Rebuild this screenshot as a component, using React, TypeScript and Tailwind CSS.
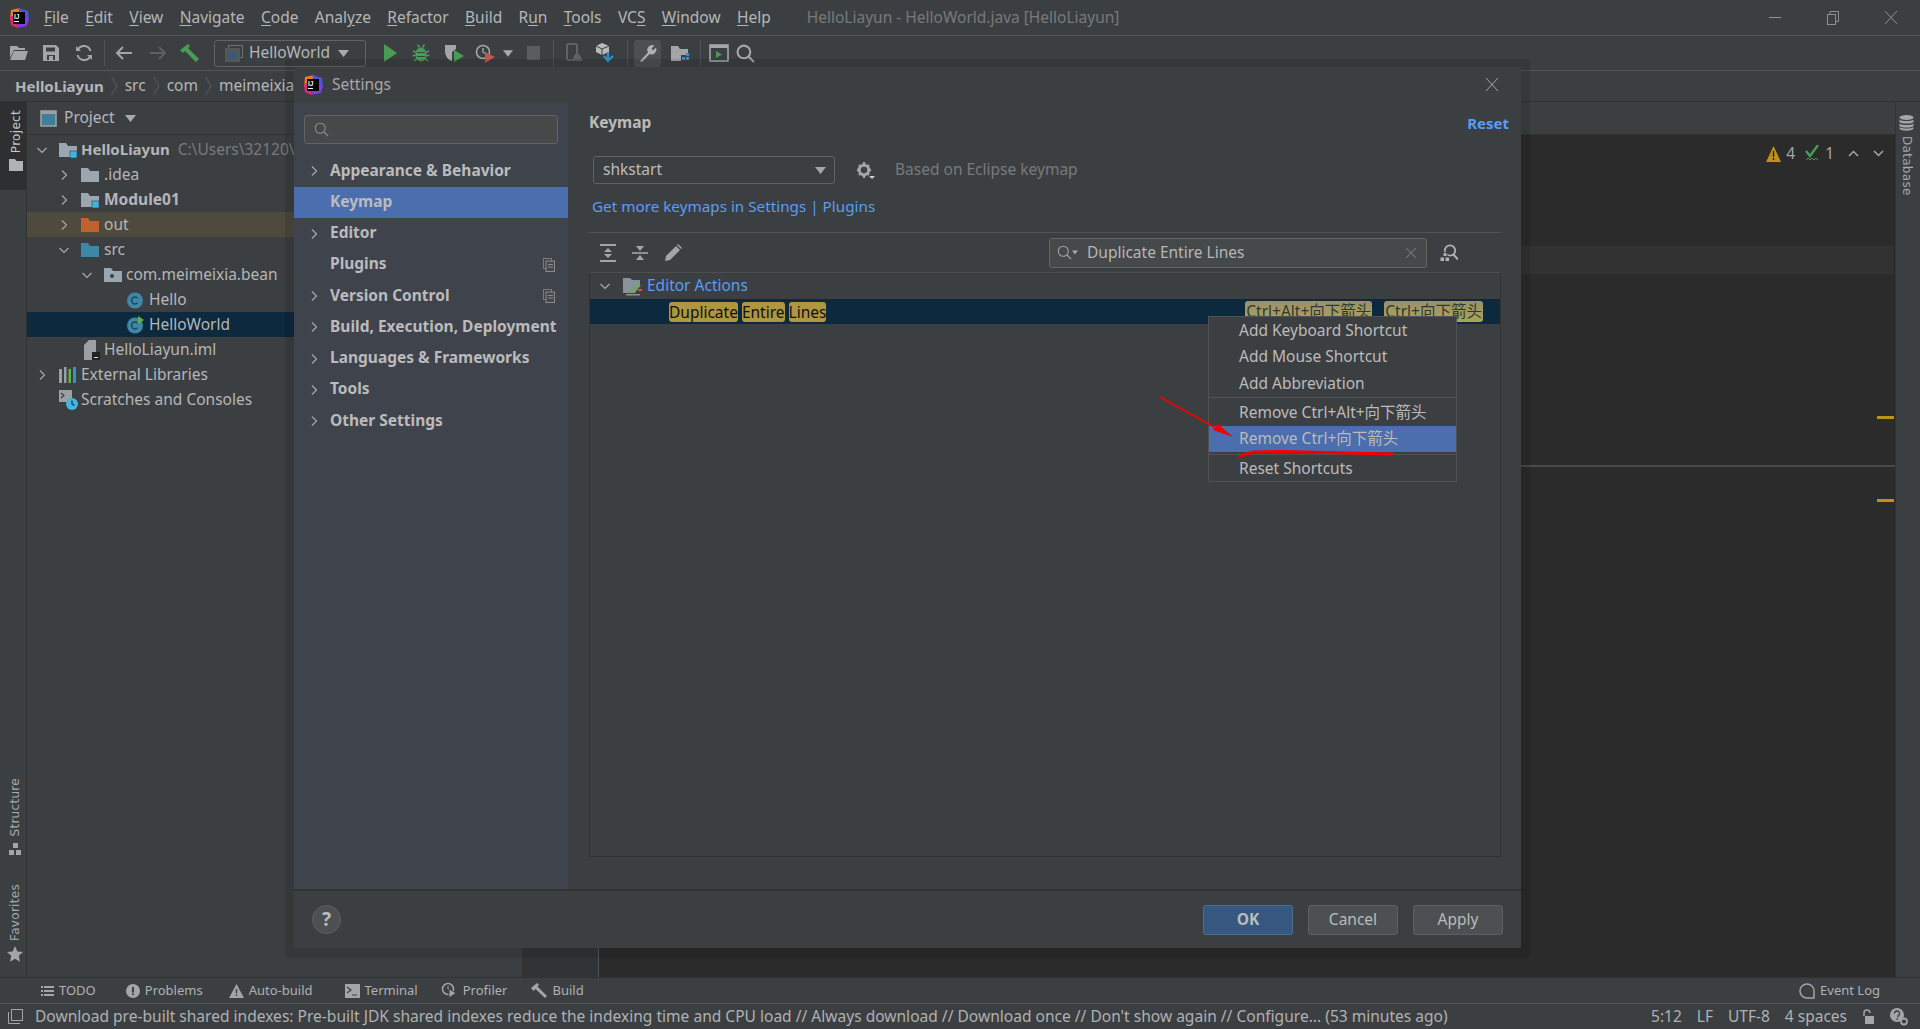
import React from 'react';

const Logo = ({ size = 20 }: { size?: number }) => (
  <svg width={size} height={size} viewBox="0 0 20 20">
    <path d="M2 2 L11 0 L8 10 L1 12 Z" fill="#f97a12" />
    <path d="M1 9 L8 6 L8 20 L2 17 Z" fill="#e8256f" />
    <path d="M9 0 L19 3 L20 13 L12 8 Z" fill="#4a55e8" />
    <path d="M10 8 L20 10 L18 18 L8 20 Z" fill="#7c3ce8" />
    <rect x="4" y="4" width="12" height="12" fill="#000" />
    <text x="5" y="10.5" fontSize="6.5" fontWeight="700" fill="#fff" fontFamily="Liberation Sans">IJ</text>
    <rect x="5" y="13" width="5" height="1" fill="#fff" />
  </svg>
);

const FolderIcon = ({ color = '#9aa7b0', badge = false, dot = false, w = 18 }: { color?: string; badge?: boolean; dot?: boolean; w?: number }) => (
  <svg width={w} height={16} viewBox="0 0 18 16" className="shrink-0">
    <path d="M0 1h7l2 3h9v11H0z" fill={color} />
    {dot && <circle cx="8" cy="9" r="2" fill="#3c3f41" />}
    {badge && <rect x="11" y="9" width="7" height="7" fill="#3cb4e6" stroke="#3c3f41" strokeWidth="0.6" />}
  </svg>
);

const ClassIcon = ({ run = false }: { run?: boolean }) => (
  <svg width={18} height={18} viewBox="0 0 18 18" className="shrink-0">
    <circle cx="9" cy="9.5" r="8" fill="#3f87a8" />
    <path d="M11.5 7.2 A3.4 3.4 0 1 0 11.5 11.8" fill="none" stroke="#24475a" strokeWidth="1.5" />
    {run && <path d="M12 0 L18 4 L12 8 Z" fill="#5fb34a" />}
  </svg>
);

const Chevron = ({ open = false }: { open?: boolean }) => (
  <svg width={12} height={12} viewBox="0 0 12 12" className="shrink-0">
    <path d={open ? 'M1.5 4 L6 8.5 L10.5 4' : 'M4 1.5 L8.5 6 L4 10.5'} fill="none" stroke="#a6a8aa" strokeWidth="1.2" />
  </svg>
);

const Tri = ({ color = '#a8aaac', w = 11 }: { color?: string; w?: number }) => (
  <svg width={w} height={7} viewBox="0 0 11 7" className="shrink-0">
    <path d="M0 0h11L5.5 7z" fill={color} />
  </svg>
);

const CopyIcon = () => (
  <svg width={12} height={14} viewBox="0 0 12 14" className="shrink-0">
    <rect x="0.5" y="0.5" width="8" height="10" fill="none" stroke="#787b7d" />
    <rect x="3" y="3" width="8.5" height="10.5" fill="#45484b" stroke="#8a8d8f" />
    <path d="M5 6.5h5M5 9h5" stroke="#8a8d8f" />
  </svg>
);

const SearchGlyph = ({ size = 18, color = '#a8aaac', sw = 2 }: { size?: number; color?: string; sw?: number }) => (
  <svg width={size} height={size} viewBox="0 0 18 18" className="shrink-0">
    <circle cx="7.5" cy="7.5" r="6" fill="none" stroke={color} strokeWidth={sw} />
    <path d="M12 12 L17 17" stroke={color} strokeWidth={sw} />
  </svg>
);

const menus: [string, string, string][] = [
  ['', 'F', 'ile'], ['', 'E', 'dit'], ['', 'V', 'iew'], ['', 'N', 'avigate'], ['', 'C', 'ode'],
  ['Anal', 'y', 'ze'], ['', 'R', 'efactor'], ['', 'B', 'uild'], ['R', 'u', 'n'], ['', 'T', 'ools'],
  ['VC', 'S', ''], ['', 'W', 'indow'], ['', 'H', 'elp'],
];

const TitleBar = () => (
  <div className="relative h-[36px] shrink-0 flex items-center border-b border-[#515456] bg-[#3c3f41]">
    <div className="ml-[9px] w-[20px]"><Logo /></div>
    <div className="ml-[15px] flex gap-[16.4px] text-[#b4b6b8]">
      {menus.map((m) => (
        <span key={m[0] + m[1]}>{m[0]}<span className="underline underline-offset-2">{m[1]}</span>{m[2]}</span>
      ))}
    </div>
    <span className="ml-[36px] text-[#77797b]">HelloLiayun - HelloWorld.java [HelloLiayun]</span>
    <div className="ml-auto mr-[23px] flex items-center gap-[46px]">
      <div className="w-[12px] h-px bg-[#8d8f91]" />
      <svg width={12} height={14} viewBox="0 0 12 14"><rect x="0.5" y="3.5" width="8" height="10" fill="none" stroke="#8d8f91" /><path d="M3 3V0.5h8.5v10H9" fill="none" stroke="#8d8f91" /></svg>
      <svg width={12} height={13} viewBox="0 0 12 13"><path d="M0 0L12 13M12 0L0 13" stroke="#8d8f91" /></svg>
    </div>
  </div>
);

const Sep = ({ cls }: { cls: string }) => <div className={`w-px h-[26px] bg-[#515456] shrink-0 ${cls}`} />;

const Toolbar = () => (
  <div className="h-[35px] shrink-0 flex items-center border-b border-[#515456] bg-[#3c3f41]">
    <svg className="ml-[9px] shrink-0" width={20} height={16} viewBox="0 0 20 16"><path d="M1 1h7l2 2h6v2H5L1 13z" fill="#a3a5a7" /><path d="M5 6h14l-3 9H1z" fill="#a3a5a7" /></svg>
    <svg className="ml-[12px] shrink-0" width={20} height={18} viewBox="0 0 18 18"><path d="M1 1h13l3 3v13H1z" fill="#a3a5a7" /><rect x="4" y="3.5" width="9" height="4" fill="#3c3f41" /><rect x="5" y="11" width="8" height="5" fill="#3c3f41" /><rect x="7" y="12" width="4" height="4" fill="#a3a5a7" /></svg>
    <svg className="ml-[13px] shrink-0" width={20} height={18} viewBox="0 0 18 18"><path d="M15.5 7A7 7 0 0 0 3 5M2.5 11A7 7 0 0 0 15 13" fill="none" stroke="#a3a5a7" strokeWidth="2" /><path d="M1 2v5h5zM17 16v-5h-5z" fill="#a3a5a7" /></svg>
    <Sep cls="ml-[10px]" />
    <svg className="ml-[9px] shrink-0" width={20} height={16} viewBox="0 0 20 16"><path d="M18 8H4M9 2L3 8l6 6" fill="none" stroke="#a3a5a7" strokeWidth="2" /></svg>
    <svg className="ml-[14px] shrink-0" width={20} height={16} viewBox="0 0 20 16"><path d="M2 8h14M11 2l6 6-6 6" fill="none" stroke="#5d6062" strokeWidth="2" /></svg>
    <svg className="ml-[12px] shrink-0" width={20} height={20} viewBox="0 0 20 20"><path d="M0 7L8 1l2 2-2 2 11 11-3 3L5 8 3 10z" fill="#499c54" /></svg>
    <div className="ml-[14px] w-[152px] h-[27px] rounded-[3px] border border-[#646464] flex items-center shrink-0">
      <svg className="ml-[10px] shrink-0" width={18} height={17} viewBox="0 0 18 17"><rect x="3.5" y="0.5" width="14" height="12" fill="none" stroke="#6e7173" /><rect x="0" y="3" width="15" height="14" fill="#555859" /><rect x="2" y="6" width="11" height="9" fill="#3d5a72" /></svg>
      <span className="ml-[6px] text-[#b4b6b8]">HelloWorld</span>
      <span className="ml-[8px]"><Tri /></span>
    </div>
    <svg className="ml-[14px] shrink-0" width={20} height={20} viewBox="0 0 20 20"><path d="M4 1l13 9-13 9z" fill="#499c54" /></svg>
    <svg className="ml-[11px] shrink-0" width={20} height={20} viewBox="0 0 20 20"><path d="M6.5 1.5l2 3M13.5 1.5l-2 3M2 8l3 1.5M18 8l-3 1.5M1.5 12.5h3.5M18.5 12.5H15M3 18l3-2.5M17 18l-3-2.5" stroke="#499c54" strokeWidth="1.6" /><ellipse cx="10" cy="11.5" rx="5.5" ry="7" fill="#499c54" /><path d="M6 9.5h8M6 13.5h8" stroke="#3c3f41" strokeWidth="1.1" /></svg>
    <svg className="ml-[13px] shrink-0" width={20} height={20} viewBox="0 0 20 20"><path d="M1 2h11v4L8 9v9C4 17 1 13 1 8z" fill="#a3a5a7" /><path d="M10 7l10 6-10 6z" fill="#499c54" /></svg>
    <svg className="ml-[11px] shrink-0" width={20} height={20} viewBox="0 0 20 20"><circle cx="8" cy="9" r="6.5" fill="none" stroke="#a3a5a7" strokeWidth="1.6" /><path d="M8 5v4l3 2" fill="none" stroke="#a3a5a7" strokeWidth="1.4" /><path d="M10 9l10 5-10 6z" fill="#c75450" /></svg>
    <span className="ml-[8px]"><Tri w={10} /></span>
    <div className="ml-[10px] w-[20px] flex justify-center shrink-0"><div className="w-[13px] h-[14px] bg-[#5a5d5f]" /></div>
    <Sep cls="ml-[10px]" />
    <svg className="ml-[11px] shrink-0" width={20} height={20} viewBox="0 0 20 20"><rect x="2" y="1" width="10" height="16" rx="1" fill="none" stroke="#5f6264" strokeWidth="2" /><path d="M7 18l3-7h4l4 7z" fill="#5f6264" /></svg>
    <svg className="ml-[10px] shrink-0" width={20} height={20} viewBox="0 0 20 20"><path d="M7 0l7 3v6l-7 3-6-3V3z" fill="#b8babc" /><path d="M7 6L1 3M7 6l7-3M7 6v6" stroke="#3c3f41" /><path d="M13 9v7M9 13l4 5 5-5" fill="none" stroke="#3592c4" strokeWidth="2.2" /></svg>
    <Sep cls="ml-[12px]" />
    <div className="ml-[6px] w-[27px] h-[27px] rounded-[3px] bg-[#4c5052] flex items-center justify-center shrink-0">
      <svg width={20} height={20} viewBox="0 0 20 20"><path d="M2 18L10 9.5A5 5 0 0 1 16.5 2.5L13.5 5.5 15 7.5 18 4.5A5 5 0 0 1 11.5 11L4 19z" fill="#b0b2b4" /></svg>
    </div>
    <svg className="ml-[9px] shrink-0" width={20} height={20} viewBox="0 0 20 20"><path d="M1 3h7l2 3h8v6h-7v6H1z" fill="#a3a5a7" /><path d="M12 14h3v3h-3zM16 14h3v3h-3zM16 10h3v3h-3z" fill="#3592c4" /></svg>
    <Sep cls="ml-[10px]" />
    <svg className="ml-[8px] shrink-0" width={20} height={18} viewBox="0 0 20 18"><rect x="1" y="1" width="18" height="16" fill="none" stroke="#a3a5a7" strokeWidth="1.6" /><rect x="1" y="1" width="18" height="3" fill="#a3a5a7" /><path d="M7 7l6 3.5-6 3.5z" fill="#499c54" /></svg>
    <div className="ml-[7px]"><SearchGlyph size={19} color="#a3a5a7" /></div>
  </div>
);

const Crumb = () => (
  <svg width={7} height={20} viewBox="0 0 7 20" className="shrink-0"><path d="M0.5 1L6 10L0.5 19" fill="none" stroke="#5b5e60" /></svg>
);

const Breadcrumb = () => (
  <div className="h-[31px] shrink-0 flex items-center gap-[7px] pl-[15px] border-b border-[#323232] bg-[#3c3f41] text-[#b4b6b8]">
    <span className="font-bold text-[15px]">HelloLiayun</span>
    <Crumb />
    <span>src</span>
    <Crumb />
    <span>com</span>
    <Crumb />
    <span>meimeixia</span>
  </div>
);

const VText = ({ children, cls }: { children: string; cls: string }) => (
  <span className={`[writing-mode:vertical-rl] font-['DejaVu_Sans'] text-[12px] tracking-[0.3px] ${cls}`}>{children}</span>
);

const LeftStripe = () => (
  <div className="w-[27px] shrink-0 flex flex-col items-center border-r border-[#323232] bg-[#3c3f41]">
    <div className="w-full h-[88px] bg-[#2d2f30] flex flex-col items-center pt-[8px] pl-[5px]">
      <VText cls="rotate-180 text-[#c8c9ca]">Project</VText>
      <svg className="mt-[6px]" width={14} height={12} viewBox="0 0 14 12"><path d="M0 0h6l1.5 2H14v10H0z" fill="#b0b2b4" /></svg>
    </div>
    <div className="mt-auto flex flex-col items-center pl-[3px]">
      <VText cls="rotate-180 text-[#a6a8aa]">Structure</VText>
      <svg className="mt-[7px]" width={12} height={13} viewBox="0 0 12 13"><path d="M4 0h5v5H4zM0 7h5v5H0zM7 7h5v5H7z" fill="#a3a5a7" /></svg>
      <div className="h-[28px]" />
      <VText cls="rotate-180 text-[#a6a8aa]">Favorites</VText>
      <svg className="mt-[5px] mb-[15px]" width={16} height={16} viewBox="0 0 16 16"><path d="M8 0l2.4 5.4 5.6.6-4.2 3.8 1.2 6L8 12.8 3 15.8l1.2-6L0 6l5.6-.6z" fill="#a3a5a7" /></svg>
    </div>
  </div>
);

const TreeRow = ({ cls, children }: { cls: string; children: React.ReactNode }) => (
  <div className={`h-[25px] flex items-center text-[#b4b6b8] ${cls}`}>{children}</div>
);

const ProjectPanel = () => (
  <div className="w-[495px] shrink-0 flex flex-col bg-[#3c3f41]">
    <div className="h-[33px] shrink-0 flex items-center border-b border-[#323232] text-[#b4b6b8]">
      <svg className="ml-[13px] shrink-0" width={17} height={17} viewBox="0 0 17 17"><rect x="1" y="1" width="15" height="15" fill="#3d7f9c" stroke="#9aa0a4" strokeWidth="1.6" /><rect x="1" y="1" width="15" height="3" fill="#9aa0a4" /></svg>
      <span className="ml-[7px]">Project</span>
      <span className="ml-[10px]"><Tri /></span>
    </div>
    <div className="pt-[2px]">
      <TreeRow cls="pl-[9px]">
        <Chevron open /><span className="ml-[11px]"><FolderIcon badge /></span>
        <span className="ml-[4px] font-bold text-[15px]">HelloLiayun</span>
        <span className="ml-[8px] text-[#787a7c]">C:\Users\32120\</span>
      </TreeRow>
      <TreeRow cls="pl-[31px]"><Chevron /><span className="ml-[11px]"><FolderIcon /></span><span className="ml-[5px]">.idea</span></TreeRow>
      <TreeRow cls="pl-[31px]"><Chevron /><span className="ml-[11px]"><FolderIcon badge /></span><span className="ml-[5px] font-bold">Module01</span></TreeRow>
      <TreeRow cls="pl-[31px] bg-[#4f4a3e]"><Chevron /><span className="ml-[11px]"><FolderIcon color="#c0622d" /></span><span className="ml-[5px]">out</span></TreeRow>
      <TreeRow cls="pl-[31px]"><Chevron open /><span className="ml-[11px]"><FolderIcon color="#3f87a8" /></span><span className="ml-[5px]">src</span></TreeRow>
      <TreeRow cls="pl-[54px]"><Chevron open /><span className="ml-[11px]"><FolderIcon dot /></span><span className="ml-[4px]">com.meimeixia.bean</span></TreeRow>
      <TreeRow cls="pl-[99px]"><ClassIcon /><span className="ml-[5px]">Hello</span></TreeRow>
      <TreeRow cls="pl-[99px] bg-[#0d293e]"><ClassIcon run /><span className="ml-[5px]">HelloWorld</span></TreeRow>
      <TreeRow cls="pl-[57px]">
        <svg className="shrink-0" width={16} height={20} viewBox="0 0 16 20"><path d="M5 0h7v12H8v8H0V5z" fill="#9aa0a4" /><rect x="8" y="12" width="8" height="8" fill="#222" /><rect x="10" y="17" width="4" height="1" fill="#ddd" /></svg>
        <span className="ml-[4px]">HelloLiayun.iml</span>
      </TreeRow>
      <TreeRow cls="pl-[9px]">
        <Chevron />
        <svg className="ml-[11px] shrink-0" width={18} height={17} viewBox="0 0 18 17"><path d="M0 3h3v14H0z" fill="#9aa0a4" /><path d="M5 1h2.5v16H5z" fill="#9aa0a4" /><path d="M9.5 3H12v14H9.5z" fill="#62b543" /><path d="M14 1h3v16h-3z" fill="#3592c4" /></svg>
        <span className="ml-[4px]">External Libraries</span>
      </TreeRow>
      <TreeRow cls="pl-[32px]">
        <svg className="shrink-0" width={19} height={20} viewBox="0 0 19 20"><path d="M0 0h13v12H0z" fill="#9aa0a4" /><path d="M2 3l3 2.5L2 8" fill="none" stroke="#3c3f41" strokeWidth="1.2" /><circle cx="13" cy="14" r="6" fill="#40b6e0" /><path d="M13 10.5V14l2.5 1.5" fill="none" stroke="#2b2b2b" strokeWidth="1.2" /></svg>
        <span className="ml-[3px]">Scratches and Consoles</span>
      </TreeRow>
    </div>
  </div>
);

const EditorArea = () => (
  <div className="flex-1 flex flex-col min-w-0">
    <div className="h-[33px] shrink-0 border-b border-[#323232] bg-[#3c3f41]" />
    <div className="relative flex-1 flex bg-[#2b2b2b]">
      <div className="w-[77px] shrink-0 bg-[#313335] border-r border-[#555555]" />
      <div className="flex-1 pr-[2px]">
        <div className="mt-[111px] h-[28px] bg-[#323232]" />
        <div className="mt-[191px] -mr-[2px] h-[2px] bg-[#4a4a4a]" />
      </div>
      <div className="absolute right-[1px] top-[281px] w-[17px] h-[3px] bg-[#be9117]" />
      <div className="absolute right-[1px] top-[364px] w-[17px] h-[3px] bg-[#be9117]" />
      <div className="absolute right-[11px] top-[7px] flex items-center text-[#a6a8aa]">
        <svg width={15} height={16} viewBox="0 0 15 16"><path d="M7.5 0L15 16H0z" fill="#be9117" /><path d="M6.8 5h1.4v6H6.8zM6.8 12h1.4v2H6.8z" fill="#222" /></svg>
        <span className="ml-[5px]">4</span>
        <svg className="ml-[10px]" width={15} height={17} viewBox="0 0 15 17"><path d="M1 6l4 5L13 0" fill="none" stroke="#499c54" strokeWidth="2.4" /><path d="M1 15l2-2 2 2 2-2 2 2 2-2 2 2" fill="none" stroke="#499c54" /></svg>
        <span className="ml-[5px]">1</span>
        <svg className="ml-[14px]" width={11} height={7} viewBox="0 0 11 7"><path d="M1 6l4.5-4.5L10 6" fill="none" stroke="#a6a8aa" strokeWidth="1.5" /></svg>
        <svg className="ml-[14px]" width={11} height={7} viewBox="0 0 11 7"><path d="M1 1l4.5 4.5L10 1" fill="none" stroke="#a6a8aa" strokeWidth="1.5" /></svg>
      </div>
    </div>
  </div>
);

const RightStripe = () => (
  <div className="w-[25px] shrink-0 flex flex-col items-center pt-[13px] pr-[3px] border-l border-[#323232] bg-[#3c3f41]">
    <svg width={15} height={16} viewBox="0 0 15 16"><ellipse cx="7.5" cy="2.5" rx="7" ry="2.5" fill="#a3a5a7" /><path d="M0.5 4.5C2 6.5 13 6.5 14.5 4.5V7C13 9 2 9 0.5 7zM0.5 8.5C2 10.5 13 10.5 14.5 8.5V11C13 13 2 13 0.5 11zM0.5 12C2 14 13 14 14.5 12V13.5C13 16.5 2 16.5 0.5 13.5z" fill="#a3a5a7" /></svg>
    <VText cls="mt-[5px] text-[#a6a8aa]">Database</VText>
  </div>
);

const navItems = [
  { t: 'Appearance & Behavior', c: true },
  { t: 'Keymap', sel: true },
  { t: 'Editor', c: true },
  { t: 'Plugins', copy: true },
  { t: 'Version Control', c: true, copy: true },
  { t: 'Build, Execution, Deployment', c: true },
  { t: 'Languages & Frameworks', c: true },
  { t: 'Tools', c: true },
  { t: 'Other Settings', c: true },
];

const SettingsNav = () => (
  <div className="w-[274px] shrink-0 pt-[13px] bg-[#3f434c]">
    <div className="mx-[10px] h-[29px] flex items-center pl-[9px] rounded-[3px] border border-[#646464] bg-[#45494a]">
      <SearchGlyph size={15} color="#8d8f91" sw={1.3} />
    </div>
    <div className="mt-[11.5px]">
      {navItems.map((n) => (
        <div key={n.t} className={`h-[31.25px] flex items-center font-bold text-[#bbbbbb] ${n.sel ? 'bg-[#4b6eaf]' : ''}`}>
          <div className="w-[36px] pl-[14px] shrink-0">{n.c && <Chevron />}</div>
          <span className="pb-[2px]">{n.t}</span>
          {n.copy && <span className="ml-auto mr-[13px] flex"><CopyIcon /></span>}
        </div>
      ))}
    </div>
  </div>
);

const KeymapPanel = () => (
  <div className="flex-1 min-w-0 pl-[21px] pr-[20px] pt-[10px]">
    <div className="h-[22px] flex items-center justify-between -mr-[8px] font-bold">
      <span className="text-[#bbbbbb]">Keymap</span>
      <span className="text-[15px] text-[#589df6]">Reset</span>
    </div>
    <div className="mt-[22px] ml-[4px] flex items-center">
      <div className="w-[242px] h-[28px] flex items-center pl-[9px] pr-[8px] justify-between rounded-[3px] border border-[#646464] bg-[#3c3f41] text-[#bbbbbb]">
        <span>shkstart</span><Tri color="#a3a5a7" />
      </div>
      <svg className="ml-[21px] shrink-0" width={19} height={19} viewBox="0 0 19 19"><circle cx="8" cy="9" r="4.7" fill="none" stroke="#a3a5a7" strokeWidth="3" /><path d="M8 1v3M8 14v3M1 9h3M12 9h3M3 4l2 2M11 12l2 2M13 4l-2 2M5 12l-2 2" stroke="#a3a5a7" strokeWidth="2.4" /><path d="M13 15h6l-3 3z" fill="#d0d0d0" /></svg>
      <span className="ml-[20px] text-[#787a7c]">Based on Eclipse keymap</span>
    </div>
    <div className="mt-[12px] ml-[3px] h-[20px] flex items-center text-[15.25px] text-[#589df6]">Get more keymaps in Settings | Plugins</div>
    <div className="mt-[16px] h-px bg-[#515456]" />
    <div className="h-[39px] flex items-center">
      <svg className="ml-[11px] shrink-0" width={16} height={18} viewBox="0 0 16 18"><path d="M0 1h16M0 17h16" stroke="#a3a5a7" strokeWidth="2" /><path d="M8 4l4 4H4zM8 14l4-4H4z" fill="#a3a5a7" /></svg>
      <svg className="ml-[16px] shrink-0" width={16} height={16} viewBox="0 0 16 16"><path d="M0 8h16" stroke="#a3a5a7" strokeWidth="1.6" /><path d="M8 6l4-5H4zM8 10l4 5H4z" fill="#a3a5a7" /></svg>
      <svg className="ml-[17px] shrink-0" width={17} height={17} viewBox="0 0 17 17"><path d="M0 17l1-5L11 2l4 4L5 16zM12 1l1-1 4 4-1 1z" fill="#a3a5a7" /></svg>
      <div className="ml-[367px] w-[378px] h-[30px] flex items-center rounded-[3px] border border-[#646464] bg-[#45494a] text-[#b4b6b8] shrink-0">
        <span className="ml-[7px] flex items-center"><SearchGlyph size={15} color="#a3a5a7" sw={1.3} /><Tri w={6} /></span>
        <span className="ml-[9px]">Duplicate Entire Lines</span>
        <svg className="ml-auto mr-[10px]" width={10} height={10} viewBox="0 0 10 10"><path d="M0 0l10 10M10 0L0 10" stroke="#6e7173" strokeWidth="1.2" /></svg>
      </div>
      <svg className="ml-[13px] shrink-0" width={18} height={18} viewBox="0 0 18 18"><circle cx="10" cy="6.5" r="5.2" fill="none" stroke="#b0b2b4" strokeWidth="1.8" /><path d="M13.5 10.5L18 15.5" stroke="#b0b2b4" strokeWidth="2" /><rect x="3" y="8.5" width="4" height="4" fill="#b0b2b4" stroke="#3c3f41" /><rect x="0" y="13" width="4.5" height="4.5" fill="#b0b2b4" stroke="#3c3f41" /><rect x="5" y="13" width="4.5" height="4.5" fill="#b0b2b4" stroke="#3c3f41" /></svg>
    </div>
    <div className="h-[585px] border border-[#323232] border-t-[#4d4d4d] bg-[#3c3f41]">
      <div className="h-[26px] flex items-center text-[#589df6]">
        <span className="ml-[9px]"><Chevron open /></span>
        <svg className="ml-[12px] shrink-0" width={19} height={19} viewBox="0 0 19 19"><path d="M0 1h7l2 2h8v5l-5 8H0z" fill="#8a9299" /><path d="M6 13l2 2 2-2M12 13l5-5" fill="none" stroke="#62b543" strokeWidth="2.2" /><rect x="15" y="12" width="4" height="2" fill="#c75450" /><rect x="3" y="17" width="14" height="1.5" fill="#8a9299" /></svg>
        <span className="ml-[5px]">Editor Actions</span>
      </div>
      <div className="h-[25px] flex items-center bg-[#0d293e] pl-[79px] pr-[17px] text-[#111111]">
        <span className="h-[20px] leading-[20px] rounded-[3px] bg-[#af9640]">Duplicate</span>
        <span className="ml-[4px] h-[20px] leading-[20px] rounded-[3px] bg-[#af9640]">Entire</span>
        <span className="ml-[4px] h-[20px] leading-[20px] rounded-[3px] bg-[#af9640]">Lines</span>
        <span className="ml-auto h-[21px] leading-[21px] px-[1px] rounded-[3px] bg-linear-to-b from-[#9c8f6c] to-[#aaa552] text-[#2c3a36]">Ctrl+Alt+向下箭头</span>
        <span className="ml-[12px] h-[21px] leading-[21px] px-[1px] rounded-[3px] bg-linear-to-b from-[#9c8f6c] to-[#aaa552] text-[#2c3a36]">Ctrl+向下箭头</span>
      </div>
    </div>
  </div>
);

const PopupMenu = () => (
  <div className="absolute left-[914px] top-[249px] w-[249px] h-[166px] border border-[#515151] bg-[#3c3f41] text-[#bbbbbb]">
    <div className="h-[26.5px] flex items-center pl-[30px]">Add Keyboard Shortcut</div>
    <div className="h-[26.5px] flex items-center pl-[30px]">Add Mouse Shortcut</div>
    <div className="h-[26.5px] flex items-center pl-[30px]">Add Abbreviation</div>
    <div className="h-px bg-[#515151]" />
    <div className="mt-[2px] h-[26px] flex items-center pl-[30px]">Remove Ctrl+Alt+向下箭头</div>
    <div className="h-[26px] flex items-center pl-[30px] bg-[#4b6eaf]">Remove Ctrl+向下箭头</div>
    <div className="mt-[2px] h-px bg-[#515151]" />
    <div className="mt-[2px] h-[24px] flex items-center pl-[30px]">Reset Shortcuts</div>
  </div>
);

const SettingsDialog = () => (
  <div className="absolute left-[294px] top-[67px] w-[1227px] h-[881px] rounded-[1px] flex flex-col bg-[#3c3f41] shadow-[0_1px_1px_9px_rgba(0,0,0,0.11)]">
    <div className="h-[35px] shrink-0 flex items-center">
      <span className="ml-[9px]"><Logo /></span>
      <span className="ml-[9px] text-[#a6a8aa]">Settings</span>
      <svg className="ml-auto mr-[23px]" width={12} height={13} viewBox="0 0 12 13"><path d="M0 0L12 13M12 0L0 13" stroke="#a3a5a7" /></svg>
    </div>
    <div className="flex-1 flex min-h-0">
      <SettingsNav />
      <KeymapPanel />
    </div>
    <div className="h-[59px] shrink-0 flex items-center border-t-2 border-[#323232] pl-[18px] pr-[18px] bg-[#3c3f41]">
      <div className="w-[29px] h-[29px] rounded-full border border-[#5e6060] bg-[#4c5052] flex items-center justify-center font-bold text-[19px] text-[#bbbbbb]">?</div>
      <div className="ml-auto w-[90px] h-[30px] rounded-[3px] border border-[#4c708c] bg-[#365880] flex items-center justify-center font-bold text-[#bbbbbb]">OK</div>
      <div className="ml-[15px] w-[90px] h-[30px] rounded-[3px] border border-[#5e6060] bg-[#4c5052] flex items-center justify-center text-[#bbbbbb]">Cancel</div>
      <div className="ml-[15px] w-[90px] h-[30px] rounded-[3px] border border-[#5e6060] bg-[#4c5052] flex items-center justify-center text-[#bbbbbb]">Apply</div>
    </div>
    <PopupMenu />
  </div>
);

const RedMarks = () => (
  <svg className="absolute left-[1150px] top-[390px] pointer-events-none" width={260} height={75} viewBox="0 0 260 75">
    <path d="M10 7 L66 38" stroke="#f40000" strokeWidth="1.6" fill="none" />
    <path d="M83 47 L63 40 L68 34 Z" fill="#f40000" />
    <path d="M90 66 L103 62 L130 61.5 L242 64" stroke="#f40000" strokeWidth="3" fill="none" strokeLinecap="round" />
  </svg>
);

const ToolTab = ({ icon, label, cls }: { icon: React.ReactNode; label: string; cls: string }) => (
  <div className={`flex items-center gap-[5px] ${cls}`}>{icon}<span>{label}</span></div>
);

const ToolWindowBar = () => (
  <div className="h-[27px] shrink-0 flex items-center border-t border-[#323232] border-b-[#515456] border-b bg-[#3c3f41] text-[13px] text-[#afb1b3]">
    <ToolTab cls="ml-[41px]" label="TODO" icon={<svg width={13} height={12} viewBox="0 0 13 12"><path d="M0 1h2v2H0zM3 1h10v2H3zM0 5h2v2H0zM3 5h10v2H3zM0 9h2v2H0zM3 9h10v2H3z" fill="#a3a5a7" /></svg>} />
    <ToolTab cls="ml-[30px]" label="Problems" icon={<svg width={14} height={14} viewBox="0 0 14 14"><circle cx="7" cy="7" r="7" fill="#a3a5a7" /><path d="M6 3h2v5.5H6zM6 9.5h2V11H6z" fill="#3c3f41" /></svg>} />
    <ToolTab cls="ml-[26px]" label="Auto-build" icon={<svg width={15} height={14} viewBox="0 0 15 14"><path d="M7.5 0L15 14H0z" fill="#a3a5a7" /><path d="M6.8 5h1.4v4.5H6.8zM6.8 10.5h1.4v1.6H6.8z" fill="#3c3f41" /></svg>} />
    <ToolTab cls="ml-[32px]" label="Terminal" icon={<svg width={15} height={14} viewBox="0 0 15 14"><rect width="15" height="14" fill="#a3a5a7" /><path d="M2 3l4 3-4 3M7 11h5" fill="none" stroke="#3c3f41" strokeWidth="1.2" /></svg>} />
    <ToolTab cls="ml-[23px]" label="Profiler" icon={<svg width={17} height={17} viewBox="0 0 17 17"><circle cx="7" cy="7" r="5.5" fill="none" stroke="#a3a5a7" strokeWidth="1.5" /><path d="M7 4v3l2 1" fill="none" stroke="#a3a5a7" /><path d="M8 7l7 4-7 5z" fill="#a3a5a7" stroke="#3c3f41" /></svg>} />
    <ToolTab cls="ml-[24px]" label="Build" icon={<svg width={16} height={15} viewBox="0 0 16 15"><path d="M0 5l6-5 2 2-1.5 1.5L16 13l-2 2L4.5 6 2.5 8z" fill="#a3a5a7" /></svg>} />
    <div className="ml-auto mr-[40px] flex items-center gap-[5px]">
      <svg width={16} height={16} viewBox="0 0 16 16"><path d="M14 15H8a7 7 0 1 1 7-7v7z" fill="none" stroke="#a3a5a7" strokeWidth="1.5" /></svg>
      <span>Event Log</span>
    </div>
  </div>
);

const StatusBar = () => (
  <div className="h-[25px] shrink-0 flex items-center bg-[#3c3f41] text-[#afb1b3]">
    <svg className="ml-[8px] shrink-0" width={15} height={15} viewBox="0 0 15 15"><rect x="3.5" y="0.5" width="11" height="11" fill="none" stroke="#a3a5a7" /><path d="M0.5 3v11.5H12" fill="none" stroke="#a3a5a7" /></svg>
    <span className="ml-[12px] text-[15.55px]">Download pre-built shared indexes: Pre-built JDK shared indexes reduce the indexing time and CPU load // Always download // Download once // Don't show again // Configure... (53 minutes ago)</span>
    <div className="ml-auto mr-[11px] flex items-center gap-[15px]">
      <span>5:12</span><span>LF</span><span>UTF-8</span><span>4 spaces</span>
      <svg width={12} height={16} viewBox="0 0 12 16"><path d="M2 7V4a3 3 0 0 1 6 0" fill="none" stroke="#a3a5a7" strokeWidth="1.5" /><rect x="3" y="7" width="9" height="8" fill="#a3a5a7" /></svg>
      <svg width={20} height={18} viewBox="0 0 20 18"><circle cx="8" cy="7" r="7" fill="#a3a5a7" /><path d="M5.5 5.5a2.5 2.5 0 1 1 3.5 2.3V9.5M8 10.5V12" fill="none" stroke="#3c3f41" strokeWidth="1.4" /><circle cx="15" cy="13.5" r="3" fill="none" stroke="#a3a5a7" strokeWidth="1.8" /></svg>
    </div>
  </div>
);

export default function App() {
  return (
    <div className="relative w-[1920px] h-[1029px] overflow-hidden flex flex-col bg-[#3c3f41] font-['Noto_Sans','Noto_Sans_CJK_SC',sans-serif] text-[15.5px]">
      <TitleBar />
      <Toolbar />
      <Breadcrumb />
      <div className="flex-1 flex min-h-0">
        <LeftStripe />
        <ProjectPanel />
        <EditorArea />
        <RightStripe />
      </div>
      <ToolWindowBar />
      <StatusBar />
      <SettingsDialog />
      <RedMarks />
    </div>
  );
}
